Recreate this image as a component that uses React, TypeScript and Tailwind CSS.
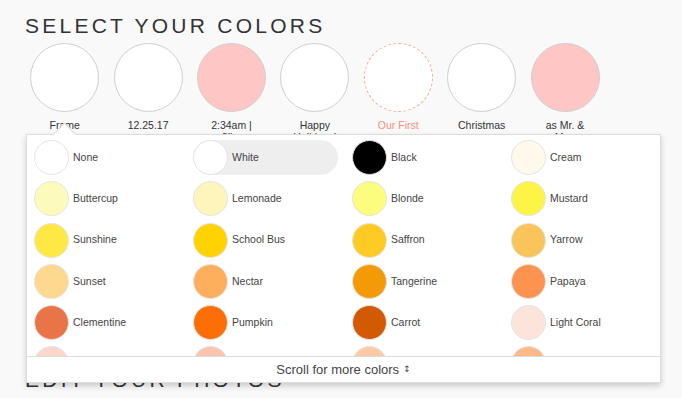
import clsx from 'clsx';

interface Photo {
  label: string;
  fill: 'white' | 'pink';
  dashed?: boolean;
}

interface Swatch {
  name: string;
  hex: string;
}

const photos: Photo[] = [
  { label: 'Frame', fill: 'white' },
  { label: '12.25.17', fill: 'white' },
  { label: '2:34am | 8lbs', fill: 'pink' },
  { label: 'Happy Holidays!', fill: 'white' },
  { label: 'Our First', fill: 'white', dashed: true },
  { label: 'Christmas', fill: 'white' },
  { label: 'as Mr. & Mrs.', fill: 'pink' },
];

// last row only peeks out above the footer, so it carries no names
const swatches: Swatch[] = [
  { name: 'None', hex: '#ffffff' },
  { name: 'White', hex: '#ffffff' },
  { name: 'Black', hex: '#000000' },
  { name: 'Cream', hex: '#fef9ea' },
  { name: 'Buttercup', hex: '#fcfbbb' },
  { name: 'Lemonade', hex: '#fdf5bb' },
  { name: 'Blonde', hex: '#fcfc7e' },
  { name: 'Mustard', hex: '#fdf446' },
  { name: 'Sunshine', hex: '#fee843' },
  { name: 'School Bus', hex: '#fed300' },
  { name: 'Saffron', hex: '#fecb25' },
  { name: 'Yarrow', hex: '#f9c55a' },
  { name: 'Sunset', hex: '#fdd98f' },
  { name: 'Nectar', hex: '#fdaf5d' },
  { name: 'Tangerine', hex: '#f59a07' },
  { name: 'Papaya', hex: '#fe9350' },
  { name: 'Clementine', hex: '#e87447' },
  { name: 'Pumpkin', hex: '#fe6e07' },
  { name: 'Carrot', hex: '#d35a05' },
  { name: 'Light Coral', hex: '#fde4da' },
  { name: '', hex: '#fbd6c9' },
  { name: '', hex: '#fcc3ae' },
  { name: '', hex: '#fec9a5' },
  { name: '', hex: '#ffb888' },
];

const SELECTED = 'White';

function ColorPicker() {
  return (
    <div className="absolute left-[26px] top-[134px] flex h-[249px] w-[635px] flex-col border border-[#dcdcdc] bg-white shadow-[0_3px_6px_rgba(0,0,0,0.18)]">
      {/* caret pointing at the first photo */}
      <div className="absolute -top-[9.5px] left-[29px] h-[17px] w-[17px] rotate-45 border-l border-t border-[#dcdcdc] bg-white" />

      <div className="relative h-[221px] overflow-hidden">
        <div className="grid grid-cols-[repeat(4,145px)] gap-x-[14px] gap-y-[6.3px] pl-[7px] pt-[5px]">
          {swatches.map((s, i) => (
            <div
              key={i}
              className={clsx(
                'flex h-[35px] items-center rounded-full',
                s.name === SELECTED && 'bg-[#eeeeee]',
              )}
            >
              <span
                className="h-[35px] w-[35px] shrink-0 rounded-full border border-[#e4e4e4]"
                style={{ backgroundColor: s.hex }}
              />
              {s.name && <span className="ml-[4px] text-[10.5px] text-[#444]">{s.name}</span>}
            </div>
          ))}
        </div>
      </div>

      <div className="flex h-[26px] items-center justify-center border-t border-[#dcdcdc] text-[13px] text-[#444]">
        <span>Scroll for more colors</span>
        <span className="ml-[4px] font-['DejaVu_Sans'] text-[9px]">↕</span>
      </div>
    </div>
  );
}

export default function App() {
  return (
    <div className="relative h-[398px] w-full overflow-hidden bg-[#f9f9f9] font-['Liberation_Sans',sans-serif] text-[#333]">
      <h1 className="pl-[25px] pt-[15px] text-[21px] leading-[21px] tracking-[3.25px] text-[#333]">
        SELECT YOUR COLORS
      </h1>

      <div className="mt-[7px] flex pl-[23px]">
        {photos.map((p) => (
          <div key={p.label} className="flex w-[83.4px] flex-col items-center">
            <div
              className={clsx(
                'h-[69px] w-[69px] rounded-full border',
                p.fill === 'pink' ? 'bg-[#fec6c5]' : 'bg-white',
                p.dashed ? 'border-dashed border-[#f7a595]' : 'border-[#cfcfcf]',
              )}
            />
            <div
              className={clsx(
                'mt-[7px] h-[24px] w-[56px] overflow-hidden text-center text-[10.5px] leading-[12px]',
                p.dashed ? 'text-[#f5907e]' : 'text-[#333]',
              )}
            >
              {p.label}
            </div>
          </div>
        ))}
      </div>

      <h2 className="mt-[226px] pl-[25px] text-[21px] leading-[21px] tracking-[3.25px] text-[#333]">
        EDIT YOUR PHOTOS
      </h2>

      <ColorPicker />
    </div>
  );
}
